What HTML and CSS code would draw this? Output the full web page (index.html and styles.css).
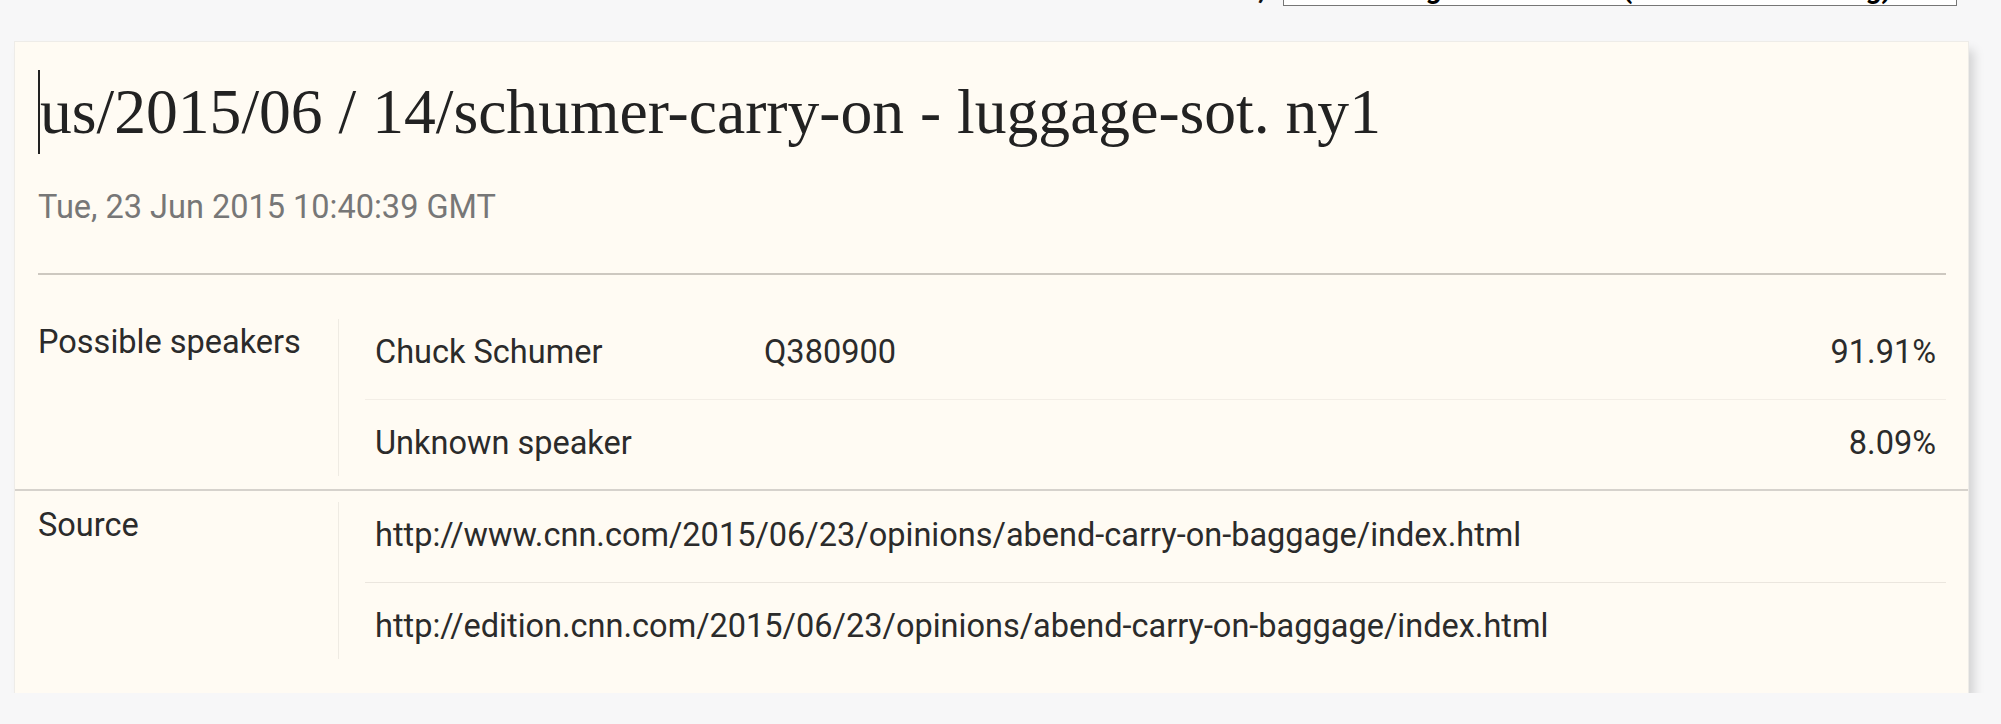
FILE: index.html
```html
<!DOCTYPE html>
<html lang="en">
<head>
<meta charset="utf-8">
<title>Quote detail</title>
<link rel="stylesheet" href="styles.css">
</head>
<body>
<div class="topbar">
  <span class="sort-label">Order,</span>
  <div class="select">Ordering: Most Recent (Newest Descending)</div>
</div>
<main class="card">
  <header class="card-head">
    <h1 class="title"><span class="caret"></span>us/2015/06 / 14/schumer-carry-on - luggage-sot. ny1</h1>
    <div class="date">Tue, 23 Jun 2015 10:40:39 GMT</div>
  </header>
  <section class="section speakers">
    <div class="label">Possible speakers</div>
    <div class="values">
      <div class="row"><span class="name">Chuck Schumer</span><span class="qid">Q380900</span><span class="pct">91.91%</span></div>
      <div class="row"><span class="name">Unknown speaker</span><span class="qid"></span><span class="pct">8.09%</span></div>
    </div>
  </section>
  <section class="section source">
    <div class="label">Source</div>
    <div class="values">
      <div class="row"><span class="url">http://www.cnn.com/2015/06/23/opinions/abend-carry-on-baggage/index.html</span></div>
      <div class="row"><span class="url">http://edition.cnn.com/2015/06/23/opinions/abend-carry-on-baggage/index.html</span></div>
    </div>
  </section>
</main>
</body>
</html>
```
FILE: styles.css
```css
html, body {
  margin: 0;
  padding: 0;
}
body {
  background: #f7f7f8;
  font-family: Roboto, "Liberation Sans", sans-serif;
  color: #2b2b2b;
}
.topbar {
  display: flex;
  justify-content: flex-end;
  align-items: flex-end;
  height: 6px;
  margin-bottom: 36px;
  padding-right: 44px;
}
.sort-label {
  font-weight: bold;
  font-size: 28px;
  line-height: 28px;
  margin-right: 18px;
  margin-bottom: 3px;
  color: #111;
}
.select {
  flex: none;
  box-sizing: border-box;
  width: 674px;
  height: 46px;
  border: 1px solid #767676;
  background: #fff;
  font-weight: bold;
  font-size: 28px;
  line-height: 28px;
  color: #000;
  display: flex;
  align-items: flex-end;
  justify-content: flex-start;
  padding: 0 0 2px 48px;
  white-space: nowrap;
  overflow: hidden;
}
.card {
  margin: 0 33px 0 15px;
  background: #fffbf3;
  box-shadow: 0 0 0 1px #eeece8, 6px 8px 10px rgba(0, 0, 0, 0.15);
}
.card-head {
  padding: 28px 22px 0 23px;
}
.title {
  margin: 0;
  font-family: "Liberation Serif", "DejaVu Serif", serif;
  font-weight: normal;
  font-size: 63.6px;
  line-height: 84px;
  color: #222;
  white-space: nowrap;
}
.caret {
  display: inline-block;
  width: 2px;
  height: 84px;
  background: #222;
  vertical-align: top;
}
.date {
  margin-top: 35px;
  font-size: 32.5px;
  line-height: 36px;
  color: #777;
  padding-bottom: 48px;
  border-bottom: 2px solid #cdc8c0;
}
.section {
  display: flex;
  padding: 44px 22px 13px 23px;
  font-size: 32.5px;
  line-height: 36px;
}
.speakers {
  border-bottom: 2px solid #d6d2cc;
}
.source {
  padding-top: 11px;
  padding-bottom: 34px;
}
.label {
  flex: none;
  width: 300px;
  padding-top: 5px;
}
.values {
  flex: 1;
  border-left: 1px solid #efebe3;
  padding-left: 26px;
}
.row {
  display: flex;
  padding: 15px 10px;
}
.row:not(:last-child) {
  padding-bottom: 29px;
  border-bottom: 1px solid #f3eee6;
}
.row + .row {
  padding-top: 25px;
}
.source .row:not(:last-child) {
  border-bottom-color: #ebe6de;
}
.name {
  flex: none;
  width: 389px;
}
.pct {
  margin-left: auto;
}
.url {
  white-space: nowrap;
}
```
